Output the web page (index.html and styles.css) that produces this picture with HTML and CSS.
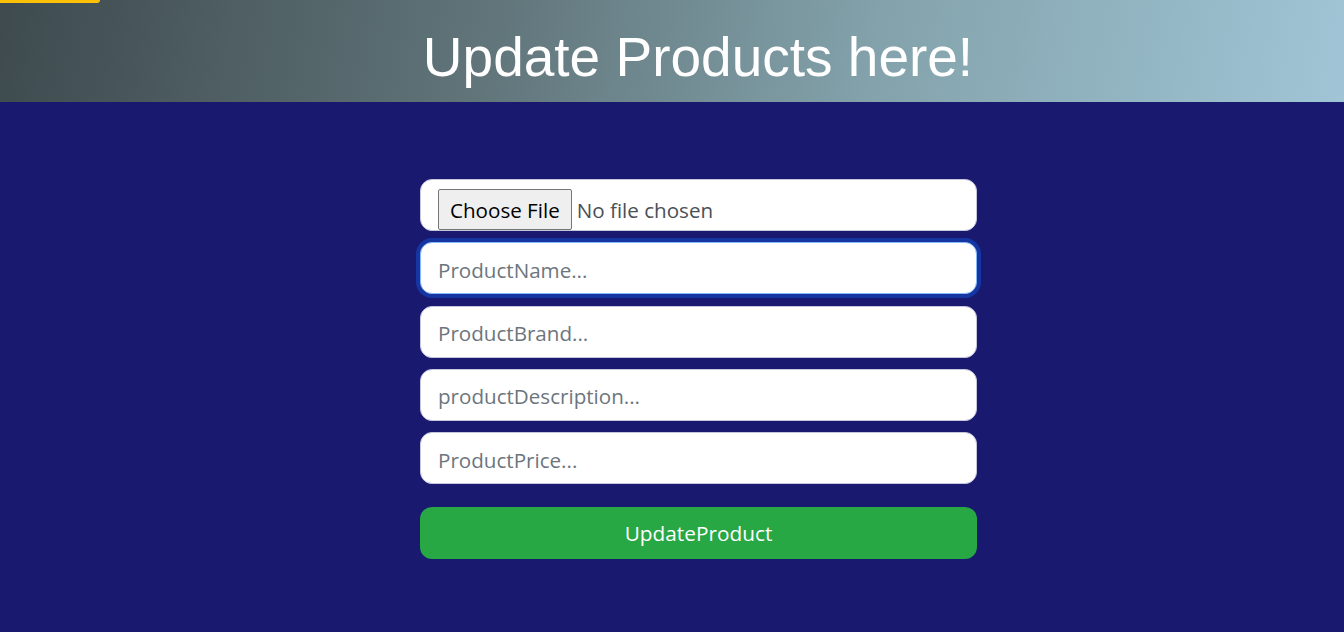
FILE: index.html
```html
<!DOCTYPE html>
<html lang="en">
<head>
<meta charset="utf-8">
<title>Update Products</title>
<link rel="stylesheet" href="styles.css">
</head>
<body>
<div class="top-tab"></div>
<header class="hero">
  <h1 class="hero-title">Update Products here!</h1>
</header>
<main class="page">
  <form class="product-form">
    <input class="field field-file" type="file">
    <input class="field is-focus" type="text" placeholder="ProductName..." autofocus>
    <input class="field" type="text" placeholder="ProductBrand...">
    <input class="field" type="text" placeholder="productDescription...">
    <input class="field" type="text" placeholder="ProductPrice...">
    <button class="submit" type="button">UpdateProduct</button>
  </form>
</main>
</body>
</html>
```
FILE: styles.css
```css
* { box-sizing: border-box; }
html, body { margin: 0; padding: 0; }
body {
  background: #1a1970;
  min-height: 632px;
  font-family: "Open Sans", "Noto Sans", sans-serif;
}
.top-tab {
  position: absolute;
  top: 0;
  left: 0;
  width: 100px;
  height: 3px;
  background: #ffc107;
  border-bottom-right-radius: 4px;
}
.hero {
  height: 102px;
  background: linear-gradient(100deg, #3e4a4e 0%, #5f7378 35%, #83a2ab 65%, #a0c5d6 100%);
  display: flex;
  justify-content: center;
  padding-left: 52px;
}
.hero-title {
  margin: 0;
  padding-top: 25px;
  font-family: "Liberation Sans", Arial, sans-serif;
  font-weight: 400;
  font-size: 55px;
  line-height: 64px;
  color: #ffffff;
}
.page {
  display: flex;
  justify-content: center;
  padding: 77px 0 0 53px;
}
.product-form {
  width: 557px;
  display: flex;
  flex-direction: column;
  gap: 11.25px;
}
.field {
  height: 52px;
  width: 100%;
  margin: 0;
  padding: 3px 16px 0 17px;
  border: 1px solid #c4c6dc;
  border-radius: 12px;
  background: #ffffff;
  font-family: "Open Sans", "Noto Sans", sans-serif;
  font-size: 20.6px;
  color: #212529;
  outline: none;
}
.field::placeholder { color: #6c757d; }
.field.is-focus, .field:focus {
  border-color: #86b7fe;
  box-shadow: 0 0 0 4px rgba(13, 110, 253, 0.35);
}
.field-file {
  padding: 9px 16px 0 17px;
  color: #495057;
}
.field-file::file-selector-button {
  height: 41px;
  margin: 0 5px 0 0;
  padding: 0 11px;
  border: 1px solid #767676;
  border-radius: 2px;
  background: #efefef;
  color: #000000;
  font-family: inherit;
  font-size: 20.6px;
}
.submit {
  margin-top: 11.75px;
  height: 52px;
  width: 100%;
  border: 0;
  border-radius: 12px;
  background: #28a745;
  color: #ffffff;
  font-family: "Open Sans", "Noto Sans", sans-serif;
  font-size: 20.8px;
}
```
